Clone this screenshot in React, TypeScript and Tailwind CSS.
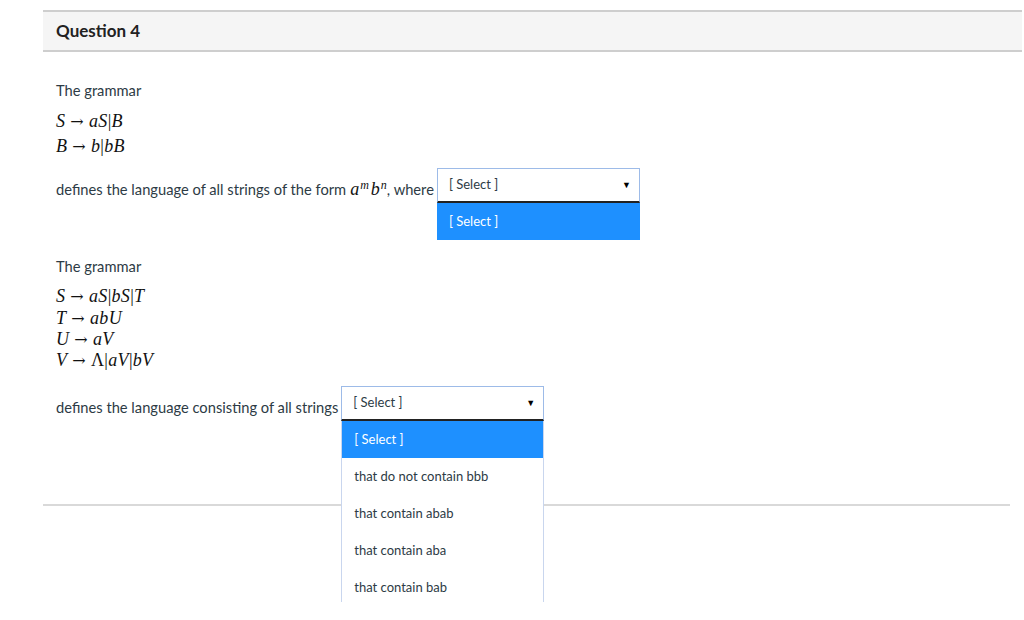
import React from "react";

const M = ({ children }: { children: React.ReactNode }) => (
  <span className="font-['Liberation_Serif',serif] italic text-[18px] text-[#111] tracking-[0.3px]">{children}</span>
);
const U = ({ children }: { children: React.ReactNode }) => (
  <span className="not-italic">{children}</span>
);
const Arrow = () => (
  <span className="not-italic mx-[5px] text-[16px] font-['DejaVu_Serif',serif]">→</span>
);

const Opt = ({ t }: { t: string }) => (
  <div className="h-[37px] text-[13px] text-[#2d3b45] flex items-center pl-[12px]">{t}</div>
);

function SelectHead() {
  return (
    <div className="w-[203px] h-[35px] border border-[#9dbbe8] border-b-2 border-b-[#222] bg-white flex items-center justify-between pl-[11px] pr-[8px] text-[13px] text-[#2d3b45]">
      <span>[ Select ]</span>
      <span className="text-[9px] text-black">▼</span>
    </div>
  );
}

export default function App() {
  return (
    <div className="w-[1024px] h-[620px] bg-white overflow-hidden relative font-['Lato',sans-serif] text-[#2d3b45]">
      <div className="ml-[43px] pt-[10px]">
        <div className="w-[979px] h-[42px] bg-[#f5f5f5] border-t-2 border-b-2 border-[#cecece] flex items-center pl-[13px] text-[17px] font-bold text-[#222]">
          Question 4
        </div>
        <div className="pl-[13px] text-[14.7px]">
          <div className="mt-[28px] leading-[20px]">The grammar</div>
          <div className="mt-[9px] leading-[25px]">
            <div>
              <M>S<Arrow />aS<U>|</U>B</M>
            </div>
            <div>
              <M>B<Arrow />b<U>|</U>bB</M>
            </div>
          </div>
          <div className="mt-[9px] flex items-center">
            <span className="mt-[7px]">
              defines the language of all strings of the form
              <span className="font-['Liberation_Serif',serif] italic text-[18px] text-[#111] ml-[4px]">
                a<sup className="text-[12px] ml-[1px]">m</sup>
                <span className="ml-[2px]">b</span>
                <sup className="text-[12px] ml-[1px]">n</sup>
              </span>
              , where
            </span>
            <div className="ml-[3px] relative">
              <SelectHead />
              <div className="absolute left-0 top-[35px] w-[203px] bg-white z-10">
                <div className="h-[37px] bg-[#1e90ff] text-white text-[13px] flex items-center pl-[12px]">[ Select ]</div>
              </div>
            </div>
          </div>
          <div className="mt-[53px] leading-[20px]">The grammar</div>
          <div className="mt-[9px]">
            <div className="leading-[23px]">
              <M>S<Arrow />aS<U>|</U>bS<U>|</U>T</M>
            </div>
            <div className="leading-[20px]">
              <M>T<Arrow />abU</M>
            </div>
            <div className="leading-[20px]">
              <M>U<Arrow />aV</M>
            </div>
            <div className="leading-[20px]">
              <M>V<Arrow /><U>Λ|</U>aV<U>|</U>bV</M>
            </div>
          </div>
          <div className="mt-[15px] flex items-center">
            <span className="mt-[7px]">defines the language consisting of all strings</span>
            <div className="ml-[3px] relative">
              <SelectHead />
              <div className="absolute left-0 top-[35px] w-[203px] h-[181px] overflow-hidden border-x border-[#c9d6ee] bg-white z-10">
                <div className="h-[37px] bg-[#1e90ff] text-white text-[13px] flex items-center pl-[12px]">[ Select ]</div>
                <Opt t="that do not contain bbb" />
                <Opt t="that contain abab" />
                <Opt t="that contain aba" />
                <Opt t="that contain bab" />
              </div>
            </div>
          </div>
        </div>
        <div className="mt-[83px] w-[967px] h-[2px] bg-[#d9d9d9]" />
      </div>
    </div>
  );
}
